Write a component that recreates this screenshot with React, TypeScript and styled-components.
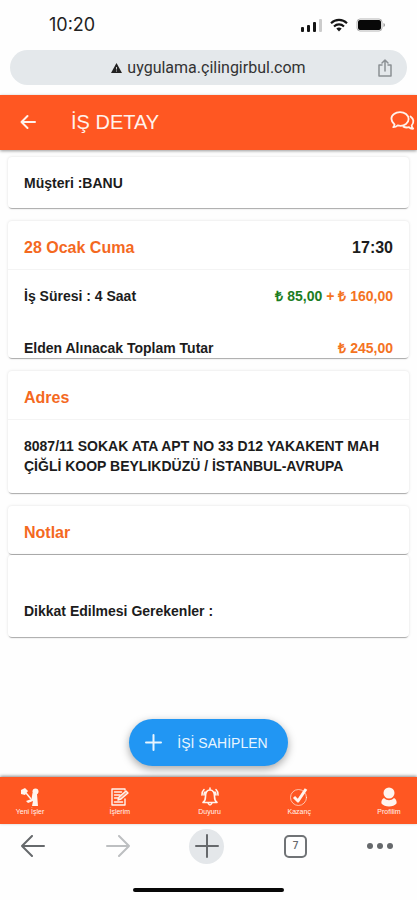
import React from "react";
import styled, { createGlobalStyle } from "styled-components";

const GlobalStyle = createGlobalStyle`
  * { box-sizing: border-box; }
  body {
    margin: 0;
    background: #fefefe;
    color: #1c1c1c;
    font-family: "Liberation Sans", Arial, sans-serif;
  }
  button { font-family: inherit; border: 0; padding: 0; background: none; cursor: pointer; }
  svg { display: block; flex: none; }
`;

const Screen = styled.div`
  display: flex;
  flex-direction: column;
  min-height: 100vh;
`;

const StatusBar = styled.div`
  display: flex;
  justify-content: space-between;
  align-items: center;
  height: 50px;
  padding: 0 31px 0 49px;
`;

const Clock = styled.time`
  font: 400 18px/20px Inter, sans-serif;
  color: #222;
`;

const StatusIcons = styled.div`
  display: flex;
  align-items: center;
  gap: 8px;
`;

const AddressBar = styled.div`
  display: grid;
  grid-template-columns: 1fr auto 1fr;
  align-items: center;
  height: 35px;
  margin: 0 10px 10px;
  padding: 0 14px;
  border-radius: 18px;
  background: #e4e8eb;
`;

const Site = styled.span`
  grid-column: 2;
  display: flex;
  align-items: center;
  gap: 5px;
  font: 400 16px/20px Roboto, sans-serif;
  color: #333;
`;

const ShareButton = styled.button`
  justify-self: end;
  color: #8b9094;
`;

const AppBar = styled.header`
  display: flex;
  align-items: center;
  height: 55px;
  padding: 0 1px 2px 19px;
  background: #ff5722;
  color: #fff2ec;
  box-shadow: 0 1px 3px rgba(0, 0, 0, 0.4);
`;

const Title = styled.h1`
  flex: 1;
  margin: 0 0 0 34px;
  font-size: 20px;
  line-height: 24px;
  font-weight: 400;
`;

const IconButton = styled.button`
  color: inherit;
`;

const Content = styled.main`
  display: flex;
  flex: 1;
  flex-direction: column;
  gap: 13px;
  padding: 7px 8px 11px;
`;

const Card = styled.section`
  border-radius: 4px;
  background: #fff;
  box-shadow: 0 2px 1px -1px rgba(0, 0, 0, 0.3), 0 0 3px rgba(0, 0, 0, 0.13);
`;

const CardHeader = styled.div<{ $divided?: boolean }>`
  display: flex;
  justify-content: space-between;
  align-items: center;
  height: ${(p) => (p.$divided ? 49 : 48)}px;
  padding: 5px 16px 0;
  border-bottom: ${(p) => (p.$divided ? "1px solid #f4f4f4" : "0")};
`;

const Heading = styled.h2`
  margin: 0;
  font-size: 16px;
  line-height: 20px;
  font-weight: 700;
  color: #f4691f;
`;

const Time = styled.time`
  font-size: 16px;
  line-height: 20px;
  font-weight: 700;
`;

const Row = styled.div<{ $height: number }>`
  display: flex;
  justify-content: space-between;
  align-items: center;
  height: ${(p) => p.$height}px;
  padding: 0 16px;
  font-size: 14px;
  line-height: 20px;
  font-weight: 700;
`;

const TotalRow = styled(Row)`
  align-items: flex-end;
`;

const Amount = styled.span<{ $green?: boolean }>`
  color: ${(p) => (p.$green ? "#1b7d22" : "#f4731f")};
`;

const Address = styled.address`
  padding: 16px 16px 17px;
  font-size: 14px;
  line-height: 20px;
  font-style: normal;
  font-weight: 700;
`;

const Stack = styled.div`
  display: flex;
  flex-direction: column;
`;

const NoteBody = styled(Card)`
  padding: 46px 16px 16px;
  margin-top: 1px;
  font-size: 14px;
  line-height: 20px;
  font-weight: 700;
`;

const ClaimButton = styled.button`
  display: flex;
  align-items: center;
  align-self: center;
  gap: 15px;
  height: 47px;
  margin-top: auto;
  padding: 0 20px 0 16px;
  border-radius: 24px;
  background: #2196f3;
  color: #e8f5ff;
  font-size: 14px;
  line-height: 20px;
  box-shadow: 0 3px 8px rgba(0, 0, 0, 0.35);
`;

const TabBar = styled.nav`
  display: flex;
  justify-content: space-between;
  height: 47px;
  padding: 10px 13px 0 15px;
  background: #ff5722;
  box-shadow: 0 -1px 3px rgba(0, 0, 0, 0.45);
`;

const Tab = styled.a`
  display: flex;
  flex-direction: column;
  align-items: center;
  width: 30px;
  gap: 1px;
  color: #fff4ee;
  font-size: 7px;
  line-height: 8px;
  text-decoration: none;
  white-space: nowrap;
`;

const BrowserBar = styled.nav`
  display: flex;
  justify-content: space-between;
  align-items: center;
  height: 44px;
  padding: 0 24px 0 20px;
  color: #66696c;
`;

const BrowserButton = styled.button<{ $faded?: boolean; $round?: boolean }>`
  display: grid;
  place-items: center;
  width: ${(p) => (p.$round ? 35 : 26)}px;
  height: 35px;
  border-radius: 50%;
  color: ${(p) => (p.$faded ? "#bdbfc1" : "#66696c")};
  background: ${(p) => (p.$round ? "#e4e7ea" : "none")};
`;

const TabCount = styled.span`
  display: grid;
  place-items: center;
  width: 23px;
  height: 23px;
  border: 2px solid #707376;
  border-radius: 5px;
  font: 500 10px/12px Roboto, sans-serif;
`;

const HomeArea = styled.div`
  display: flex;
  justify-content: center;
  height: 32px;
  padding-top: 20px;
`;

const HomeIndicator = styled.div`
  width: 36%;
  height: 4px;
  border-radius: 2px;
  background: #080808;
`;

const stroke = {
  fill: "none",
  stroke: "currentColor",
  strokeLinecap: "round" as const,
  strokeLinejoin: "round" as const,
};

const Signal = () => (
  <svg width="21" height="14" viewBox="0 0 21 14" fill="#151515">
    <rect x="0" y="9" width="3" height="5" rx="1" />
    <rect x="6" y="7" width="3" height="7" rx="1" />
    <rect x="12" y="4" width="3" height="10" rx="1" />
    <rect x="18" y="1" width="3" height="13" rx="1" fill="#ccc" />
  </svg>
);

const Wifi = () => (
  <svg width="18" height="14" viewBox="0 0 18 14">
    <g fill="none" stroke="#151515" strokeWidth="2.1">
      <path d="M1 5.2C5.5.8 12.500.8 17 5.200" />
      <path d="M4 8.400C6.800 5.700 11.200 5.700 14 8.400" />
    </g>
    <path d="M6.300 10.600Q9 8.600 11.700 10.600L9 13.500Z" fill="#151515" />
  </svg>
);

const Battery = () => (
  <svg width="30" height="14" viewBox="0 0 30 14">
    <rect x="1" y="1" width="25" height="12" rx="3" fill="#fff" stroke="#b5b5b5" />
    <rect x="2" y="2" width="23" height="10" rx="2" fill="#080808" />
    <path d="M27.500 5v4q1.500-.5 1.500-2t-1.500-2Z" fill="#999" />
  </svg>
);

const Warning = () => (
  <svg width="11" height="10" viewBox="0 0 11 10">
    <path d="M5.500 0 11 10H0Z" fill="#222" />
    <path d="M5.500 4v2.500M5.500 7.500v1" stroke="#ccc" />
  </svg>
);

const Share = () => (
  <svg width="16" height="18" viewBox="0 0 16 18" {...stroke} strokeWidth="1.500">
    <path d="M5 6H2v11h12V6h-3M8 12V1M5 4l3-3 3 3" />
  </svg>
);

const BackArrow = () => (
  <svg width="18" height="18" viewBox="0 0 18 18" {...stroke} strokeWidth="2">
    <path d="M16 9H2.500M8.500 3l-6 6 6 6" />
  </svg>
);

const Chats = () => (
  <svg width="26" height="24" viewBox="0 0 26 24" {...stroke} strokeWidth="1.800">
    <path d="M4.500 14.500C.5 11 .5 6.500 4 4c3.200-2.600 8.800-2.600 12 0 3.500 2.800 3.500 7.500 0 10-2.400 1.800-5.500 2.200-8.300 1.400-1.200 1.200-2.700 1.800-4.400 1.800.8-.8 1.200-1.700 1.200-2.700Z" />
    <path d="M20.500 6.500c3.200 2.200 3.900 6 1.200 9 0 1.300.5 2.300 1.500 3.200-1.700.2-3.100-.3-4.200-1.500-2 .5-4 .3-5.600-.6" />
  </svg>
);

const Plus = () => (
  <svg width="17" height="17" viewBox="0 0 17 17" {...stroke} strokeWidth="2">
    <path d="M8.500 1v15M1 8.500h15" />
  </svg>
);

const JobsIcon = () => (
  <svg width="20" height="20" viewBox="0 0 20 20" fill="currentColor">
    <path d="M1 3 5 1l3 3-3 4-4-1Z" />
    <circle cx="15.500" cy="4.500" r="3" />
    <path d="M12.500 6 17 7l1 12h-6l1-5-5 2-2-2 5.500-2Z" />
    <path d="m6 6 5 6" stroke="currentColor" strokeWidth="1.500" />
  </svg>
);

const FormIcon = () => (
  <svg width="20" height="20" viewBox="0 0 20 20" {...stroke} strokeWidth="1.400">
    <path d="M15 3V2H2v16h13v-6M4.500 5h7M4.500 8H10M4.500 11H8M4.500 15h8" />
    <path d="m8 13 1-3 7-6 2 2-7 6Z" fill="currentColor" fillOpacity=".45" />
  </svg>
);

const BellIcon = () => (
  <svg width="20" height="20" viewBox="0 0 20 20" {...stroke} strokeWidth="1.600">
    <path d="M3 15.500h14c-2-1.500-2.500-3-2.500-6 0-4-1.700-6.500-4.500-6.500S5.500 5.500 5.500 9.500c0 3-.5 4.500-2.500 6ZM10 1v2M8 16q2 4 4 0M2 8q-.5-3 2-5.500M18 8q.5-3-2-5.500M4 8q0-2 1-3M16 8q0-2-1-3" />
  </svg>
);

const CheckIcon = () => (
  <svg width="20" height="20" viewBox="0 0 20 20" {...stroke}>
    <circle cx="9.500" cy="10.500" r="8" strokeWidth="1" opacity=".65" />
    <path d="m5 10 4 4 8-12" strokeWidth="3" strokeLinecap="butt" />
  </svg>
);

const ProfileIcon = () => (
  <svg width="20" height="20" viewBox="0 0 20 20" fill="currentColor">
    <circle cx="10" cy="6" r="5.500" />
    <path d="M5 11c3 3 7 3 10 0 2 1 3 3 2.500 5.500-3 4-12 4-15 0C2 14 3 12 5 11Z" />
  </svg>
);

const NavArrow = ({ forward = false }: { forward?: boolean }) => (
  <svg width="24" height="22" viewBox="0 0 24 22" {...stroke} strokeWidth="2">
    <path d={forward ? "M1 11h22M13 1l10 10-10 10" : "M23 11H1M11 1 1 11l10 10"} />
  </svg>
);

const BigPlus = () => (
  <svg width="24" height="24" viewBox="0 0 24 24" {...stroke} strokeWidth="2">
    <path d="M12 1v22M1 12h22" />
  </svg>
);

const Dots = () => (
  <svg width="26" height="6" viewBox="0 0 26 6" fill="currentColor">
    <circle cx="3" cy="3" r="3" />
    <circle cx="13" cy="3" r="3" />
    <circle cx="23" cy="3" r="3" />
  </svg>
);

const tabs = [
  { label: "Yeni İşler", Icon: JobsIcon },
  { label: "İşlerim", Icon: FormIcon },
  { label: "Duyuru", Icon: BellIcon },
  { label: "Kazanç", Icon: CheckIcon },
  { label: "Profilim", Icon: ProfileIcon },
];

export default function App() {
  return (
    <Screen>
      <GlobalStyle />
      <StatusBar>
        <Clock>10:20</Clock>
        <StatusIcons>
          <Signal />
          <Wifi />
          <Battery />
        </StatusIcons>
      </StatusBar>
      <AddressBar>
        <Site>
          <Warning />
          uygulama.çilingirbul.com
        </Site>
        <ShareButton aria-label="Paylaş">
          <Share />
        </ShareButton>
      </AddressBar>
      <AppBar>
        <IconButton aria-label="Geri">
          <BackArrow />
        </IconButton>
        <Title>İŞ DETAY</Title>
        <IconButton aria-label="Mesajlar">
          <Chats />
        </IconButton>
      </AppBar>
      <Content>
        <Card>
          <Row $height={51}>Müşteri :BANU</Row>
        </Card>
        <Card>
          <CardHeader $divided>
            <Heading>28 Ocak Cuma</Heading>
            <Time>17:30</Time>
          </CardHeader>
          <Row $height={52}>
            <span>İş Süresi : 4 Saat</span>
            <Amount>
              <Amount $green>₺ 85,00</Amount> + ₺ 160,00
            </Amount>
          </Row>
          <TotalRow $height={36}>
            <span>Elden Alınacak Toplam Tutar</span>
            <Amount>₺ 245,00</Amount>
          </TotalRow>
        </Card>
        <Card>
          <CardHeader $divided>
            <Heading>Adres</Heading>
          </CardHeader>
          <Address>
            8087/11 SOKAK ATA APT NO 33 D12 YAKAKENT MAH ÇİĞLİ KOOP BEYLIKDÜZÜ / İSTANBUL-AVRUPA
          </Address>
        </Card>
        <Stack>
          <Card>
            <CardHeader>
              <Heading>Notlar</Heading>
            </CardHeader>
          </Card>
          <NoteBody>Dikkat Edilmesi Gerekenler :</NoteBody>
        </Stack>
        <ClaimButton>
          <Plus />
          İŞİ SAHİPLEN
        </ClaimButton>
      </Content>
      <TabBar>
        {tabs.map(({ label, Icon }) => (
          <Tab href="#" key={label}>
            <Icon />
            {label}
          </Tab>
        ))}
      </TabBar>
      <BrowserBar>
        <BrowserButton aria-label="Geri">
          <NavArrow />
        </BrowserButton>
        <BrowserButton aria-label="İleri" $faded>
          <NavArrow forward />
        </BrowserButton>
        <BrowserButton aria-label="Yeni sekme" $round>
          <BigPlus />
        </BrowserButton>
        <BrowserButton aria-label="Sekmeler">
          <TabCount>7</TabCount>
        </BrowserButton>
        <BrowserButton aria-label="Menü">
          <Dots />
        </BrowserButton>
      </BrowserBar>
      <HomeArea>
        <HomeIndicator />
      </HomeArea>
    </Screen>
  );
}
